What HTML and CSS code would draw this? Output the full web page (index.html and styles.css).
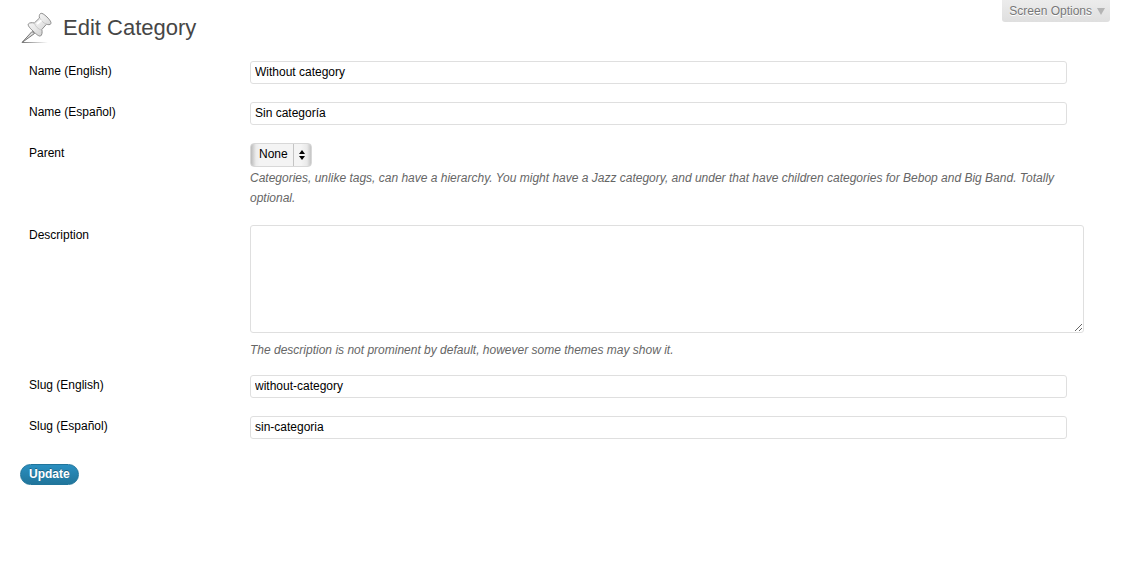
FILE: index.html
```html
<!DOCTYPE html>
<html lang="en">
<head>
<meta charset="utf-8">
<title>Edit Category</title>
<link rel="stylesheet" href="styles.css">
</head>
<body>
<div class="page">
  <header class="page-header">
    <div class="title">
      <svg class="title-icon" width="32" height="32" viewBox="0 0 32 32" aria-hidden="true">
        <defs>
          <linearGradient id="pin" x1="0" y1="0" x2="1" y2="1">
            <stop offset="0" stop-color="#fff"/>
            <stop offset=".5" stop-color="#e8e8e8"/>
            <stop offset="1" stop-color="#c4c4c4"/>
          </linearGradient>
          <linearGradient id="shadow" x1="0" x2="1">
            <stop offset="0" stop-color="#777"/>
            <stop offset="1" stop-color="#777" stop-opacity="0"/>
          </linearGradient>
        </defs>
        <path d="M2 30H28V31H2Z" fill="url(#shadow)"/>
        <path d="M12 19.500L2 30.500L14.500 21.500Z" fill="#ddd" stroke="#777" stroke-width="1"/>
        <path d="M20.500 1.500C22 .8 24 2.200 27 5C30 8 31.600 10.500 30.800 11.800C30 13 28 12.800 26.500 12.200L21.800 17.500C22.500 20.500 22 23 20.500 24C19 24.500 16.500 22.500 13 19C9.500 15.800 7.700 13.500 8.300 12C9.500 10.500 12 10.500 14.300 11L19.500 6C19 4.200 19.300 2.500 20.500 1.500Z" fill="url(#pin)" stroke="#8c8c8c" stroke-width="1"/>
        <path d="M20 6.200C21 8.500 24 11.500 26.300 12M14.500 11.200C15 14 18.500 17.500 21.300 18" fill="none" stroke="#c8c8c8"/>
        <path d="M17 12L21.500 8.200" stroke="#fff" stroke-width="2"/>
      </svg>
      <h1 class="title-text">Edit Category</h1>
    </div>
    <button class="screen-options" type="button">Screen Options
      <svg width="8" height="7" viewBox="0 0 8 7" aria-hidden="true"><path d="M0 0H8L4 7Z" fill="#b4b4b4"/></svg>
    </button>
  </header>

  <form class="form">
    <div class="row">
      <label class="label" for="name-en">Name (English)</label>
      <div class="field"><input class="input" id="name-en" type="text" value="Without category"></div>
    </div>
    <div class="row">
      <label class="label" for="name-es">Name (Español)</label>
      <div class="field"><input class="input" id="name-es" type="text" value="Sin categoría"></div>
    </div>
    <div class="row row-parent">
      <label class="label" for="parent">Parent</label>
      <div class="field">
        <div class="select-wrap">
          <select class="select" id="parent"><option>None</option></select>
          <svg class="select-arrows" width="6" height="10" viewBox="0 0 6 10" aria-hidden="true"><path d="M3 0L6 4H0ZM0 6H6L3 10Z" fill="#000"/></svg>
        </div>
        <p class="help">Categories, unlike tags, can have a hierarchy. You might have a Jazz category, and under that have children categories for Bebop and Big Band. Totally optional.</p>
      </div>
    </div>
    <div class="row row-description">
      <label class="label" for="description">Description</label>
      <div class="field">
        <textarea class="textarea" id="description"></textarea>
        <p class="help">The description is not prominent by default, however some themes may show it.</p>
      </div>
    </div>
    <div class="row">
      <label class="label" for="slug-en">Slug (English)</label>
      <div class="field"><input class="input" id="slug-en" type="text" value="without-category"></div>
    </div>
    <div class="row">
      <label class="label" for="slug-es">Slug (Español)</label>
      <div class="field"><input class="input" id="slug-es" type="text" value="sin-categoria"></div>
    </div>
    <button class="update" type="submit">Update</button>
  </form>
</div>
</body>
</html>
```
FILE: styles.css
```css
* {
  box-sizing: border-box;
}

body {
  margin: 0;
  background: #fff;
  color: #000;
  font: 12px/20px "Liberation Sans", Arial, sans-serif;
}

.page {
  padding: 0 24px 24px 20px;
}

.page-header {
  display: flex;
  justify-content: space-between;
  align-items: flex-start;
}

.title {
  display: flex;
  align-items: center;
  gap: 11px;
  padding: 12px 0 17px;
}

.title-icon {
  flex: none;
}

.title-text {
  margin: 0;
  color: #464646;
  font-size: 22px;
  font-weight: 400;
  line-height: 32px;
}

.screen-options {
  display: flex;
  align-items: center;
  gap: 5px;
  height: 22px;
  padding: 0 5px 0 7px;
  border: 0;
  border-radius: 0 0 3px 3px;
  background: linear-gradient(#ececec, #dfdfdf);
  color: #777;
  font: 12px/22px "Liberation Sans", Arial, sans-serif;
  text-shadow: 0 1px 0 #fff;
}

.row {
  display: grid;
  grid-template-columns: 221px minmax(0, 1fr);
  padding: 0 0 18px 9px;
}

.row-parent {
  padding-bottom: 17px;
}

.row-description {
  padding-bottom: 15px;
}

.input,
.textarea {
  display: block;
  margin: 0;
  border: 1px solid #dfdfdf;
  border-radius: 3px;
  background: #fff;
  color: #000;
  font: 12px/15px "Liberation Sans", Arial, sans-serif;
}

.input {
  width: 95%;
  height: 23px;
  padding: 2px 4px 3px;
}

.textarea {
  width: 97%;
  height: 108px;
  padding: 3px 4px;
  resize: vertical;
}

.select-wrap {
  position: relative;
  width: 62px;
  height: 24px;
}

.select {
  appearance: none;
  width: 100%;
  height: 100%;
  margin: 0;
  padding: 0 18px 2px 8px;
  border: 1px solid #d8d8d8;
  border-radius: 4px;
  background:
    linear-gradient(#c4c4c4, #c4c4c4) 42px 0 / 1px 100% no-repeat,
    linear-gradient(90deg, #bbb, #ececec 5px, #f4f4f4 9px, #f4f4f4 50px, #e9e9e9 56px, #c4c4c4);
  color: #000;
  font: 12px/20px "Liberation Sans", Arial, sans-serif;
}

.select-arrows {
  position: absolute;
  top: 7px;
  right: 7px;
  pointer-events: none;
}

.help {
  max-width: 97%;
  margin: 1px 0 0;
  color: #666;
  font-style: italic;
}

.row-description .help {
  margin-top: 7px;
}

.update {
  display: block;
  height: 21px;
  margin: 7px 0 0;
  padding: 0 8px;
  border: 1px solid #21759b;
  border-radius: 11px;
  background: linear-gradient(#2a8fc0, #21759b);
  color: #fff;
  font: bold 12px/19px "Liberation Sans", Arial, sans-serif;
  text-shadow: 0 -1px 0 rgba(0, 0, 0, .3);
}
```
